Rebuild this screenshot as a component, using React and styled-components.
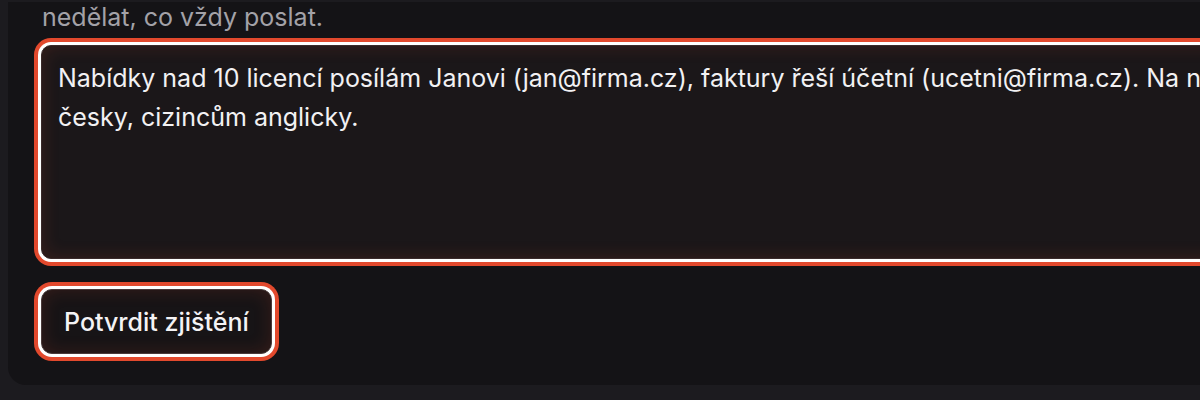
import React, { useState } from 'react';
import styled, { createGlobalStyle } from 'styled-components';

const GlobalStyle = createGlobalStyle`
  html, body {
    margin: 0;
    padding: 0;
    background: #1c1b1f;
    overflow: hidden;
  }
  body {
    font-family: Inter, 'Noto Sans', sans-serif;
  }
`;

const Page = styled.div`
  width: 1200px;
  height: 400px;
  overflow: hidden;
  padding: 0 0 15px 8px;
  box-sizing: border-box;
  display: flex;
  flex-direction: column;
  justify-content: flex-end;
`;

const Card = styled.section`
  width: 1500px;
  background: #141316;
  border-radius: 0 0 18px 18px;
  padding: 0 34px 31px 33px;
  box-sizing: border-box;
  display: flex;
  flex-direction: column;
`;

const Hint = styled.p`
  margin: 0 0 13px 1px;
  font-size: 25px;
  line-height: 30px;
  color: #a3a2a8;
`;

const focusRing = `
  box-shadow:
    0 0 0 3px #ffffff,
    0 0 0 7px #e2492d,
    inset 0 0 18px rgba(226, 73, 45, 0.16);
`;

const NoteInput = styled.textarea`
  display: block;
  width: 1410px;
  height: 214px;
  box-sizing: border-box;
  margin: 0 0 30px 0;
  padding: 13px 16px;
  border: 1px solid #3a2a2a;
  border-radius: 10px;
  background: #1b1719;
  color: #f2f1f3;
  font-family: Inter, 'Noto Sans', sans-serif;
  font-size: 25px;
  line-height: 39px;
  resize: none;
  outline: none;
  ${focusRing}
`;

const ConfirmButton = styled.button`
  align-self: flex-start;
  height: 65px;
  padding: 0 22px;
  border: 1px solid #4a3a3a;
  border-radius: 11px;
  background: #171416;
  color: #f4f3f5;
  font-family: Inter, 'Noto Sans', sans-serif;
  font-size: 25px;
  font-weight: 500;
  cursor: pointer;
  ${focusRing}
`;

export default function App() {
  const [note, setNote] = useState(
    'Nabídky nad 10 licencí posílám Janovi (jan@firma.cz), faktury řeší účetní (ucetni@firma.cz). Na nabídky odpovídám česky, cizincům anglicky.'
  );

  return (
    <>
      <GlobalStyle />
      <Page>
        <Card>
          <Hint>nedělat, co vždy poslat.</Hint>
          <NoteInput value={note} onChange={e => setNote(e.target.value)} />
          <ConfirmButton>Potvrdit zjištění</ConfirmButton>
        </Card>
      </Page>
    </>
  );
}
